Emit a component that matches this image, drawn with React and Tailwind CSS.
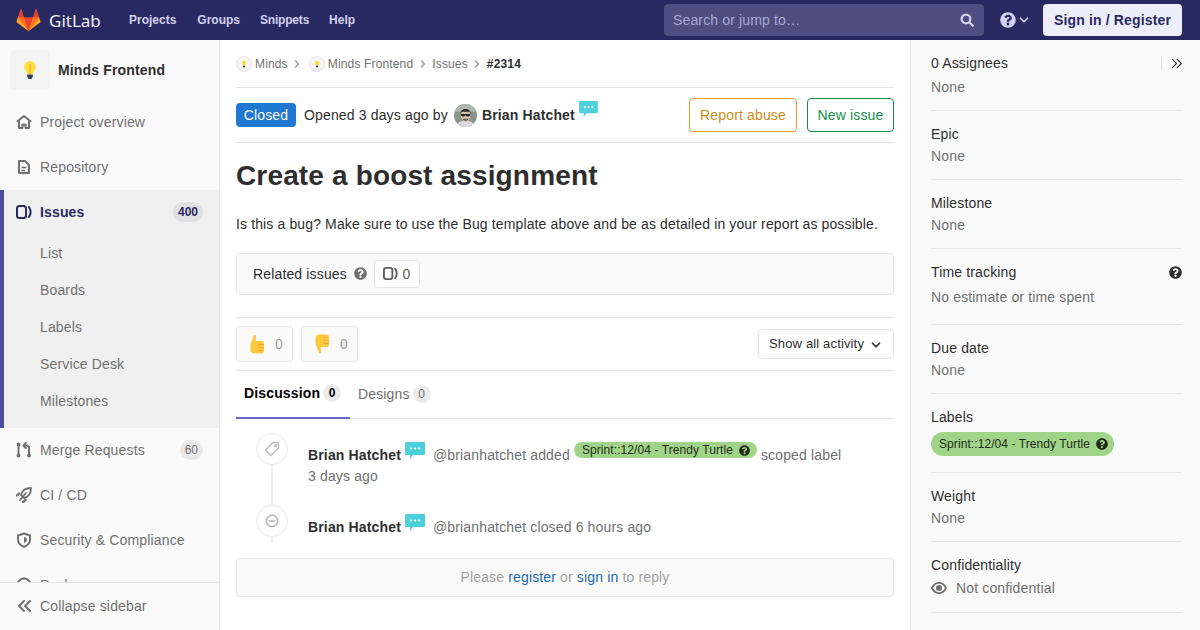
import { FaQuestionCircle } from "react-icons/fa";

const Tanuki = () => (
  <svg viewBox="0 0 36 36" className="w-[25px] h-[24px]">
    <path fill="#e24329" d="M2 14l9.38 9v-9l-4-12.28c-.205-.632-1.176-.632-1.38 0z" />
    <path fill="#e24329" d="M34 14l-9.38 9v-9l4-12.28c.205-.632 1.176-.632 1.38 0z" />
    <path fill="#e24329" d="M18,34.38 3,14 33,14 Z" />
    <path fill="#fc6d26" d="M18,34.38 11.38,14 2,14 6,25Z" />
    <path fill="#fc6d26" d="M18,34.38 24.62,14 34,14 30,25Z" />
    <path fill="#fca326" d="M2 14L.1 20.16c-.18.565 0 1.2.5 1.56l17.42 12.66z" />
    <path fill="#fca326" d="M34 14l1.9 6.16c.18.565 0 1.2-.5 1.56L18 34.38z" />
  </svg>
);

const Bulb = ({ className }) => (
  <svg viewBox="0 0 16 20" className={className}>
    <path fill="#fde047" d="M8 1a6 6 0 0 0-4 10.4c.8.8 1 1.6 1.1 2.6h5.8c.1-1 .3-1.8 1.1-2.6A6 6 0 0 0 8 1z" />
    <path fill="#fbbf24" d="M8 3c2 3 1 7 .8 11H7.2C7 10 6 6 8 3z" />
    <path fill="#374151" d="M5.2 14.6h5.6v2.2L9.4 19H6.6l-1.4-2.2z" />
  </svg>
);

const Issue = ({ className }) => (
  <svg viewBox="0 0 16 16" className={className} fill="none" stroke="currentColor" strokeWidth="2">
    <rect x="1" y="2" width="9" height="12" rx="2.5" />
    <path d="M13 3c2 3 2 7 0 10" strokeLinecap="round" />
  </svg>
);

const Home = () => (
  <svg viewBox="0 0 16 16" className="w-4 h-4" fill="none" stroke="currentColor" strokeWidth="2" strokeLinejoin="round">
    <path d="M.8 7.800 8 2l7.200 5.800" />
    <path d="M3 7v7h3.500v-3.500h3V14H13V7" />
  </svg>
);

const Doc = () => (
  <svg viewBox="0 0 16 16" className="w-4 h-4" fill="none" stroke="currentColor" strokeWidth="2" strokeLinejoin="round">
    <path d="M3 2h6l4 4v8H3z" />
    <path d="M5.500 8.500h5M5.500 11.500h3.500" strokeWidth="1.500" />
  </svg>
);

const Merge = () => (
  <svg viewBox="0 0 16 16" className="w-4 h-4" fill="none" stroke="currentColor" strokeWidth="2" strokeLinecap="round" strokeLinejoin="round">
    <path d="M2.500 3v9" />
    <circle cx="2.500" cy="13.500" r="1" />
    <circle cx="2.500" cy="2.500" r="1" />
    <circle cx="13" cy="13.500" r="1" />
    <path d="M13 11.500V6c0-1.500-1-2.500-2.500-2.500H8" />
    <path d="M9.800 1 7.500 3.500 9.800 6" />
  </svg>
);

const Rocket = () => (
  <svg viewBox="0 0 16 16" className="w-4 h-4" fill="none" stroke="currentColor" strokeWidth="1.800" strokeLinecap="round" strokeLinejoin="round">
    <path d="M15 1C10 1 6 3.500 5 8l3 3c4.500-1 7-5 7-10z" />
    <path d="M10 6 4 13" />
    <path d="M3 6.500 1 8.500M9.500 13 7 15" strokeWidth="2.400" />
  </svg>
);

const Shield = () => (
  <svg viewBox="0 0 16 16" className="w-4 h-4" fill="none" stroke="currentColor" strokeWidth="2" strokeLinejoin="round">
    <path d="M8 1.500 14 3.500V8c0 3-3 5.500-6 6.800C5 13.500 2 11 2 8V3.500z" />
    <path d="M8 5 10.800 6v2c0 1.500-1.500 2.500-2.800 3.200z" fill="currentColor" stroke="none" />
  </svg>
);

const Pkg = () => (
  <svg viewBox="0 0 16 16" className="w-4 h-4" fill="none" stroke="currentColor" strokeWidth="2">
    <circle cx="8" cy="8" r="6.500" />
  </svg>
);

const Chevrons = ({ dir = "left", className, sw = 2 }) => (
  <svg viewBox="0 0 16 16" className={className} fill="none" stroke="currentColor" strokeWidth={sw} strokeLinecap="round" strokeLinejoin="round">
    {dir === "left" ? <path d="M8 3 3 8l5 5M14 3 9 8l5 5" /> : <path d="M2 2l6 6-6 6M9 2l6 6-6 6" />}
  </svg>
);

const Search = () => (
  <svg viewBox="0 0 16 16" className="w-[14px] h-[14px]" fill="none" stroke="currentColor" strokeWidth="2.600" strokeLinecap="round">
    <circle cx="6.800" cy="6.800" r="5" />
    <path d="m10.800 10.800 3.800 3.800" />
  </svg>
);

const Caret = ({ className }) => (
  <svg viewBox="0 0 16 16" className={className} fill="none" stroke="currentColor" strokeWidth="2" strokeLinecap="round" strokeLinejoin="round">
    <path d="m4 6 4 4 4-4" />
  </svg>
);

const Bubble = ({ className }) => (
  <svg viewBox="0 0 20 17" className={className}>
    <path fill="#4dd0dc" d="M1 0h18a1 1 0 0 1 1 1v11a1 1 0 0 1-1 1H8l-3 4v-4H1a1 1 0 0 1-1-1V1a1 1 0 0 1 1-1z" />
    <circle cx="6" cy="6.500" r="1.100" fill="#fff" />
    <circle cx="10" cy="6.500" r="1.100" fill="#fff" />
    <circle cx="14" cy="6.500" r="1.100" fill="#fff" />
  </svg>
);

const Avatar = () => (
  <svg viewBox="0 0 24 24" className="w-[23px] h-[23px] rounded-full">
    <rect width="24" height="24" fill="#8a958a" />
    <path d="M0 0h24v8H0z" fill="#aeb5ab" />
    <path d="M2 24c1-5 5-6.500 10-6.500S21 19 22 24z" fill="#d9d6de" />
    <ellipse cx="12" cy="12" rx="4.800" ry="6.500" fill="#d8c0ae" />
    <path d="M6.800 10.500C6 3.500 18 3.500 17.200 10.500l-1-2.500H8z" fill="#2b2a26" />
    <path d="M7.300 10.500h9.400v1.500l-1.800 1h-1.400l-1-1h-1l-1 1H9l-1.700-1z" fill="#26262a" />
    <path d="M9 16.500c2 1.500 4 1.500 6 0l-.5-1h-5z" fill="#6a5f56" />
  </svg>
);

const ThumbUp = () => (
  <svg viewBox="0 0 16 20" className="w-4 h-5">
    <path fill="#fcc83d" d="M4.800 1c1.500-.6 2.400.3 2.200 1.800L6.600 7H13c1.400 0 2 .8 2 2v8c0 1.500-1 2.500-2.500 2.500h-7C3 19.500 1.500 18 1.500 16v-4.500C1.500 8.500 4 6 4.800 1z" />
    <path fill="none" stroke="#f3a72e" strokeWidth=".9" d="M9 10.500h6M9 13.500h6M9 16.500h5" />
  </svg>
);

const ThumbDown = () => (
  <svg viewBox="0 0 16 20" className="w-4 h-5">
    <path fill="#fcc83d" d="M4.800 19c1.500.6 2.400-.3 2.200-1.800L6.600 13H13c1.400 0 2-.8 2-2V3c0-1.500-1-2.500-2.500-2.500h-7C3 .5 1.500 2 1.500 4v4.500C1.500 11.500 4 14 4.800 19z" />
    <path fill="none" stroke="#f3a72e" strokeWidth=".9" d="M9 9.500h6M9 6.500h6M9 3.500h5" />
  </svg>
);

const Tag = () => (
  <svg viewBox="0 0 16 16" className="w-4 h-4" fill="none" stroke="#bdbdbd" strokeWidth="1.600" strokeLinejoin="round">
    <path d="M9 1.500h5.500V7L7 14.500 1.500 9z" />
    <circle cx="11.500" cy="4.500" r=".8" />
  </svg>
);

const MinusCircle = () => (
  <svg viewBox="0 0 16 16" className="w-[14px] h-[14px]" fill="none" stroke="#b5b5b5" strokeWidth="1.800" strokeLinecap="round">
    <circle cx="8" cy="8" r="6.500" />
    <path d="M5 8h6" />
  </svg>
);

const Eye = () => (
  <svg viewBox="0 0 16 12" className="w-4 h-3">
    <path fill="#707070" fillRule="evenodd" d="M8 0c3.500 0 6.500 2.200 8 6-1.500 3.800-4.500 6-8 6S1.500 9.800 0 6c1.500-3.800 4.500-6 8-6zm0 1.800C5.500 1.800 3.300 3.300 2 6c1.300 2.700 3.500 4.200 6 4.200s4.700-1.500 6-4.200c-1.300-2.700-3.500-4.200-6-4.200z" />
    <circle cx="8" cy="6" r="3" fill="#707070" />
  </svg>
);

const NavItem = ({ icon, label, count }) => (
  <div className="h-[45px] flex items-center px-4 pb-[2px] text-[#707070] shrink-0">
    <span className="w-4 mr-2 flex justify-center">{icon}</span>
    <span className="flex-1 leading-none">{label}</span>
    {count && <span className="text-xs tracking-normal bg-[#e9e9e9] rounded-full h-5 px-[5px] flex items-center">{count}</span>}
  </div>
);

const SubItem = ({ label }) => <div className="h-[37px] pb-[2px] flex items-center">{label}</div>;

const Section = ({ title, children }) => (
  <div className="pt-[13px] h-[69px] border-b border-[#eaeaea]">
    <div className="leading-[20px]">{title}</div>
    <div className="text-[#707070] leading-[20px] mt-[2px]">{children}</div>
  </div>
);

const Crumb = () => (
  <span className="w-4 h-4 rounded-full border border-[#e5e5e5] bg-[#f5f5f5] flex items-center justify-center mr-[3px]">
    <Bulb className="w-[6px] h-2" />
  </span>
);

const Timeline = ({ icon, children, line }) => (
  <div className="flex">
    <div className="w-[72px] shrink-0 flex flex-col items-center">
      <div className="w-8 h-8 rounded-full border border-[#e8e8e8] bg-white flex items-center justify-center shrink-0">{icon}</div>
      <div className={`w-[2px] bg-[#eeeeee] ${line}`} />
    </div>
    <div>{children}</div>
  </div>
);

export default function App() {
  return (
    <div className="w-[1200px] h-[630px] overflow-hidden flex flex-col bg-white text-sm tracking-[0.15px] text-[#2e2e2e] font-['Liberation_Sans',Arial,sans-serif]">
      {/* NAVBAR */}
      <header className="h-10 shrink-0 bg-[#292961] flex items-center pl-4 pr-[18px]">
        <Tanuki />
        <span className="ml-[8px] w-[80px] text-[#eeeefa] text-[17px] leading-none tracking-normal font-['Noto_Sans',sans-serif]">GitLab</span>
        <nav className="flex gap-[20px] text-[#d1d1f0] text-xs font-bold tracking-normal">
          <span className="mr-[1px]">Projects</span>
          <span>Groups</span>
          <span className="tracking-[-0.2px]">Snippets</span>
          <span>Help</span>
        </nav>
        <div className="ml-auto w-[320px] h-8 rounded bg-[#4d4d7f] flex items-center justify-between pl-[9px] pr-[10px] text-[#a9a9d3]">
          <span>Search or jump to…</span>
          <span className="text-[#d1d1f0]"><Search /></span>
        </div>
        <div className="w-[59px] pl-4 flex items-center text-[#d1d1f0]">
          <FaQuestionCircle className="w-4 h-4" />
          <Caret className="w-[14px] h-[14px] ml-[1px]" />
        </div>
        <button className="h-8 w-[139px] rounded bg-[#eeeefa] text-[#292961] font-bold">Sign in / Register</button>
      </header>

      <div className="flex-1 flex min-h-0">
        {/* LEFT SIDEBAR */}
        <aside className="w-[220px] shrink-0 bg-[#fafafa] border-r border-[#e5e5e5] flex flex-col">
          <div className="flex-1 min-h-0 overflow-hidden">
            <div className="h-[60px] flex items-center pl-[10px]">
              <div className="w-10 h-10 rounded bg-[#f4f4f4] flex items-center justify-center">
                <Bulb className="w-[16px] h-[20px]" />
              </div>
              <span className="ml-2 font-bold">Minds Frontend</span>
            </div>
            <NavItem icon={<Home />} label="Project overview" />
            <NavItem icon={<Doc />} label="Repository" />
            <div className="bg-[#f0f0f0] border-l-4 border-[#4b4ba3] h-[238px]">
              <div className="h-[45px] flex items-center pl-3 pr-4 pb-[2px] text-[#292961] font-bold">
                <Issue className="w-4 h-4 mr-2" />
                <span className="flex-1">Issues</span>
                <span className="text-xs tracking-normal bg-[#e1e1e4] rounded-full h-5 px-[5px] flex items-center">400</span>
              </div>
              <div className="pl-9 text-[#707070]">
                <SubItem label="List" />
                <SubItem label="Boards" />
                <SubItem label="Labels" />
                <SubItem label="Service Desk" />
                <SubItem label="Milestones" />
              </div>
            </div>
            <NavItem icon={<Merge />} label="Merge Requests" count="60" />
            <NavItem icon={<Rocket />} label="CI / CD" />
            <NavItem icon={<Shield />} label="Security & Compliance" />
            <NavItem icon={<Pkg />} label="Packages" />
          </div>
          <div className="h-12 shrink-0 border-t border-[#e5e5e5] flex items-center pl-4 pb-[2px] text-[#707070]">
            <Chevrons className="w-4 h-4 mr-2" />
            Collapse sidebar
          </div>
        </aside>

        {/* MAIN */}
        <main className="w-[690px] shrink-0 px-4">
          <div className="h-[48px] border-b border-[#e5e5e5] flex items-center text-xs text-[#707070]">
            <Crumb />
            Minds
            <Caret className="w-3 h-3 -rotate-90 mx-[3px] text-[#9a9a9a]" />
            <span className="w-[3px]" />
            <Crumb />
            Minds Frontend
            <Caret className="w-3 h-3 -rotate-90 mx-[3.5px] text-[#9a9a9a]" />
            Issues
            <Caret className="w-3 h-3 -rotate-90 mx-[3.5px] text-[#9a9a9a]" />
            <span className="font-bold text-[#2e2e2e]">#2314</span>
          </div>

          <div className="h-[55px] border-b border-[#e5e5e5] flex items-center">
            <span className="h-6 w-[60px] rounded bg-[#1f78d1] text-white flex items-center justify-center">Closed</span>
            <span className="ml-2">Opened 3 days ago by</span>
            <span className="ml-[6px]"><Avatar /></span>
            <span className="ml-[5px] font-bold">Brian Hatchet</span>
            <Bubble className="w-[19px] h-4 ml-1 -mt-3" />
            <button className="ml-auto h-[34px] w-[108px] rounded border border-[#e99b1a] text-[#d08a14]">Report abuse</button>
            <button className="ml-[10px] h-[34px] w-[87px] rounded border border-[#168f48] text-[#168f48]">New issue</button>
          </div>

          <h1 className="mt-4 text-[28px] font-bold leading-[34px]">Create a boost assignment</h1>
          <p className="mt-[21px] tracking-[0.13px] leading-[20px]">Is this a bug? Make sure to use the Bug template above and be as detailed in your report as possible.</p>

          <div className="mt-[19px] h-[42px] rounded border border-[#e5e5e5] bg-[#fafafa] flex items-center pl-4 pb-[1px]">
            <span>Related issues</span>
            <FaQuestionCircle className="w-[13px] h-[13px] ml-[7px] text-[#707070]" />
            <span className="ml-[7px] h-7 w-[46px] rounded border border-[#e5e5e5] bg-white flex items-center justify-center gap-1 text-[#5c5c5c]">
              <Issue className="w-[15px] h-[15px]" /> 0
            </span>
          </div>

          <div className="mt-[22px] h-[54px] border-y border-[#e5e5e5] flex items-center">
            <span className="w-[57px] h-9 rounded border border-[#e5e5e5] bg-[#fafafa] flex items-center pl-3 gap-[10px] text-[#a0a0a0]"><ThumbUp /> 0</span>
            <span className="ml-2 w-[57px] h-9 rounded border border-[#e5e5e5] bg-[#fafafa] flex items-center pl-3 gap-[10px] text-[#a0a0a0]"><ThumbDown /> 0</span>
            <span className="ml-auto w-[136px] h-[30px] rounded border border-[#e5e5e5] text-[13px] flex items-center pl-[10px] pt-[1px]">
              Show all activity
              <Caret className="w-[14px] h-[14px] ml-[5px]" />
            </span>
          </div>

          <div className="h-[48px] border-b border-[#e5e5e5] flex">
            <div className="w-[114px] border-b-2 border-[#6666c4] -mb-[1px] pl-2 pb-[2px] flex items-center font-bold text-black gap-[3px]">
              Discussion
              <span className="w-[18px] h-[18px] rounded-full bg-[#ececec] text-xs flex items-center justify-center">0</span>
            </div>
            <div className="pl-2 pb-[2px] flex items-center text-[#707070] gap-[3px]">
              Designs
              <span className="w-[18px] h-[18px] rounded-full bg-[#ececec] text-xs flex items-center justify-center">0</span>
            </div>
          </div>

          <div className="pt-[14px] h-[139px] overflow-hidden">
            <Timeline icon={<Tag />} line="h-[40px]">
              <div className="pt-[9px] flex items-start text-[#707070] leading-[20px]">
                <span className="font-bold text-[#2e2e2e] mt-[3px]">Brian Hatchet</span>
                <Bubble className="w-[20px] h-[17px] ml-1" />
                <span className="ml-2 mt-[3px]">@brianhatchet added</span>
                <span className="ml-1 h-4 mt-0 w-[183px] rounded-full bg-[#a0d488] text-[#1f2a1a] text-xs tracking-[0.08px] flex items-center pl-2 leading-none">
                  Sprint::12/04 - Trendy Turtle
                  <FaQuestionCircle className="w-[11px] h-[11px] ml-[6px]" />
                </span>
                <span className="ml-1 mt-[3px]">scoped label</span>
              </div>
              <div className="text-[#707070] mt-[1px] leading-[20px]">3 days ago</div>
            </Timeline>
            <Timeline icon={<MinusCircle />} line="h-[6px]">
              <div className="pt-[12px] flex items-start text-[#707070] leading-[20px]">
                <span className="font-bold text-[#2e2e2e]">Brian Hatchet</span>
                <Bubble className="w-[20px] h-[17px] ml-1 -mt-[3px]" />
                <span className="ml-2">@brianhatchet closed 6 hours ago</span>
              </div>
            </Timeline>
          </div>

          <div className="h-[39px] rounded border border-[#e5e5e5] bg-[#fafafa] flex items-center justify-center pb-[1px] text-[#a0a0a0] gap-[4px]">
            Please <span className="text-[#1b69b6]">register</span> or <span className="text-[#1b69b6]">sign in</span> to reply
          </div>
        </main>

        {/* RIGHT SIDEBAR */}
        <aside className="flex-1 bg-[#fafafa] border-l border-[#e5e5e5] pl-5 pr-[18px]">
          <div className="pt-[13px] border-b border-[#eaeaea] h-[71px]">
            <div className="flex items-center leading-[20px]">
              <span className="flex-1">0 Assignees</span>
              <span className="h-[14px] border-l border-[#e5e5e5] pl-[9px] flex items-center">
                <Chevrons dir="right" sw={1.6} className="w-[11px] h-[11px]" />
              </span>
            </div>
            <div className="text-[#707070] leading-[20px] mt-1">None</div>
          </div>
          <Section title="Epic">None</Section>
          <Section title="Milestone">None</Section>
          <div className="pt-[13px] border-b border-[#eaeaea] h-[76px]">
            <div className="flex items-center justify-between leading-[20px]">
              Time tracking
              <FaQuestionCircle className="w-[13px] h-[13px]" />
            </div>
            <div className="text-[#707070] leading-[20px] mt-[5px]">No estimate or time spent</div>
          </div>
          <Section title="Due date">None</Section>
          <div className="pt-[13px] border-b border-[#eaeaea] h-[79px]">
            <div className="leading-[20px]">Labels</div>
            <span className="mt-[5px] h-6 w-[183px] rounded-full bg-[#a0d488] text-[#1f2a1a] text-xs tracking-[0.08px] flex items-center pl-2">
              Sprint::12/04 - Trendy Turtle
              <FaQuestionCircle className="w-3 h-3 ml-[6px]" />
            </span>
          </div>
          <Section title="Weight">None</Section>
          <div className="pt-[13px] border-b border-[#eaeaea] h-[71px]">
            <div className="leading-[20px]">Confidentiality</div>
            <div className="flex items-center text-[#707070] leading-[20px] mt-[3px]">
              <Eye />
              <span className="ml-[9px]">Not confidential</span>
            </div>
          </div>
        </aside>
      </div>
    </div>
  );
}
